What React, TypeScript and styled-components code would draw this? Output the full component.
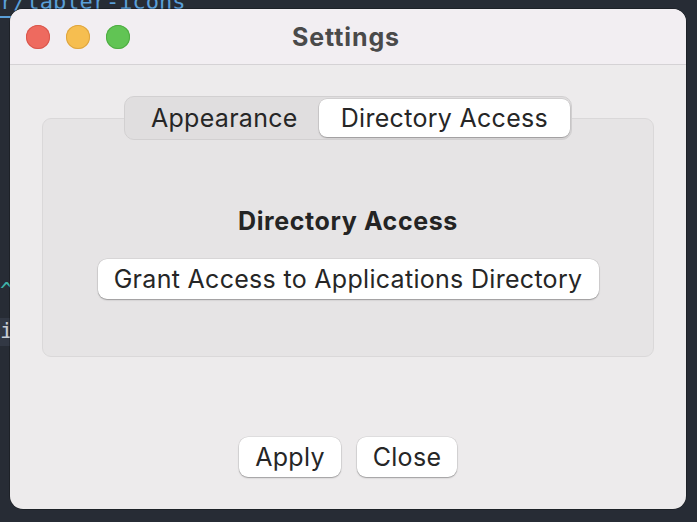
import React, { useState } from 'react';
import styled, { createGlobalStyle } from 'styled-components';

const GlobalStyle = createGlobalStyle`
  html, body {
    margin: 0;
    padding: 0;
    background: #272c35;
  }
  * {
    box-sizing: border-box;
  }
`;

const Desktop = styled.div`
  position: relative;
  width: 697px;
  height: 522px;
  overflow: hidden;
  background: #272c35;
  padding: 9px 11px 13px 10px;
`;

const CodeLine = styled.div<{ $top: number; $color: string }>`
  position: absolute;
  left: 0;
  top: ${p => p.$top}px;
  font-family: 'DejaVu Sans Mono', monospace;
  font-size: 22px;
  line-height: 26px;
  color: ${p => p.$color};
  white-space: pre;
`;

const Highlight = styled.div`
  position: absolute;
  left: 0;
  top: 318px;
  width: 20px;
  height: 28px;
  background: #323844;
`;

const Underline = styled.div`
  position: absolute;
  left: 0;
  top: 16px;
  width: 14px;
  height: 2px;
  background: #5a9fd8;
`;

const Window = styled.div`
  position: relative;
  width: 676px;
  height: 500px;
  border-radius: 13px;
  overflow: hidden;
  background: #edebec;
  display: flex;
  flex-direction: column;
  box-shadow: 0 0 0 0.5px rgba(0, 0, 0, 0.5);
`;

const TitleBar = styled.div`
  height: 56px;
  flex: none;
  display: grid;
  grid-template-columns: 1fr auto 1fr;
  align-items: center;
  background: #f2eef2;
  border-bottom: 1px solid #d5d2d5;
  padding: 0 16px;
`;

const Lights = styled.div`
  display: flex;
  gap: 16px;
`;

const Light = styled.span<{ $fill: string; $ring: string }>`
  width: 24px;
  height: 24px;
  border-radius: 50%;
  background: ${p => p.$fill};
  box-shadow: inset 0 0 0 1px ${p => p.$ring};
`;

const Title = styled.div`
  font-family: Inter, 'Liberation Sans', sans-serif;
  font-weight: 700;
  font-size: 25px;
  color: #4a4a4a;
  letter-spacing: 0.9px;
  margin-right: 4px;
`;

const Body = styled.div`
  flex: 1;
  display: flex;
  flex-direction: column;
  align-items: center;
  padding: 31px 32px 32px;
`;

const Segmented = styled.div`
  position: relative;
  z-index: 1;
  display: flex;
  height: 44px;
  padding: 2px 1px;
  margin-bottom: -22px;
  background: #e0dedf;
  border: 1px solid #d2d0d1;
  border-radius: 10px;
`;

const Segment = styled.button<{ $active: boolean }>`
  border: none;
  margin: 0;
  font-family: Inter, 'Liberation Sans', sans-serif;
  font-size: 25px;
  letter-spacing: 0.3px;
  color: #262626;
  border-radius: 8px;
  padding: ${p => (p.$active ? '0 22px' : '0 21px 0 25px')};
  background: ${p => (p.$active ? '#ffffff' : 'transparent')};
  box-shadow: ${p =>
    p.$active ? '0 1px 1.5px rgba(0,0,0,0.28), 0 0 0 0.5px rgba(0,0,0,0.12)' : 'none'};
  cursor: default;
`;

const GroupBox = styled.div`
  width: 100%;
  height: 239px;
  background: #e6e4e5;
  border: 1px solid #dad8d9;
  border-radius: 9px;
  display: flex;
  flex-direction: column;
  align-items: center;
  padding-top: 87px;
`;

const Heading = styled.div`
  font-family: Inter, 'Liberation Sans', sans-serif;
  font-weight: 700;
  font-size: 25px;
  letter-spacing: 0.6px;
  color: #242424;
  margin-bottom: 23px;
`;

const PushButton = styled.button<{ $width: number }>`
  width: ${p => p.$width}px;
  height: 40px;
  border: none;
  border-radius: 9px;
  background: #ffffff;
  font-family: Inter, 'Liberation Sans', sans-serif;
  font-size: 25px;
  letter-spacing: 0.3px;
  color: #262626;
  box-shadow: 0 1px 1.5px rgba(0, 0, 0, 0.3), 0 0 0 0.5px rgba(0, 0, 0, 0.1);
  padding: 0;
  cursor: default;
`;

const Footer = styled.div`
  margin-top: auto;
  display: flex;
  gap: 16px;
`;

export default function App() {
  const [tab, setTab] = useState('directory');

  return (
    <>
      <GlobalStyle />
      <Desktop>
        <CodeLine $top={-11} $color="#5a9fd8">r/tabler-icons</CodeLine>
        <Underline />
        <CodeLine $top={278} $color="#3fb3a8">^</CodeLine>
        <Highlight />
        <CodeLine $top={318} $color="#c7ccd4">i</CodeLine>
        <Window>
          <TitleBar>
            <Lights>
              <Light $fill="#ee6a5f" $ring="#d9574d" />
              <Light $fill="#f6be50" $ring="#dea540" />
              <Light $fill="#61c454" $ring="#4fac43" />
            </Lights>
            <Title>Settings</Title>
            <div />
          </TitleBar>
          <Body>
            <Segmented>
              <Segment $active={tab === 'appearance'} onClick={() => setTab('appearance')}>
                Appearance
              </Segment>
              <Segment $active={tab === 'directory'} onClick={() => setTab('directory')}>
                Directory Access
              </Segment>
            </Segmented>
            <GroupBox>
              <Heading>Directory Access</Heading>
              <PushButton $width={501}>Grant Access to Applications Directory</PushButton>
            </GroupBox>
            <Footer>
              <PushButton $width={102}>Apply</PushButton>
              <PushButton $width={100}>Close</PushButton>
            </Footer>
          </Body>
        </Window>
      </Desktop>
    </>
  );
}
